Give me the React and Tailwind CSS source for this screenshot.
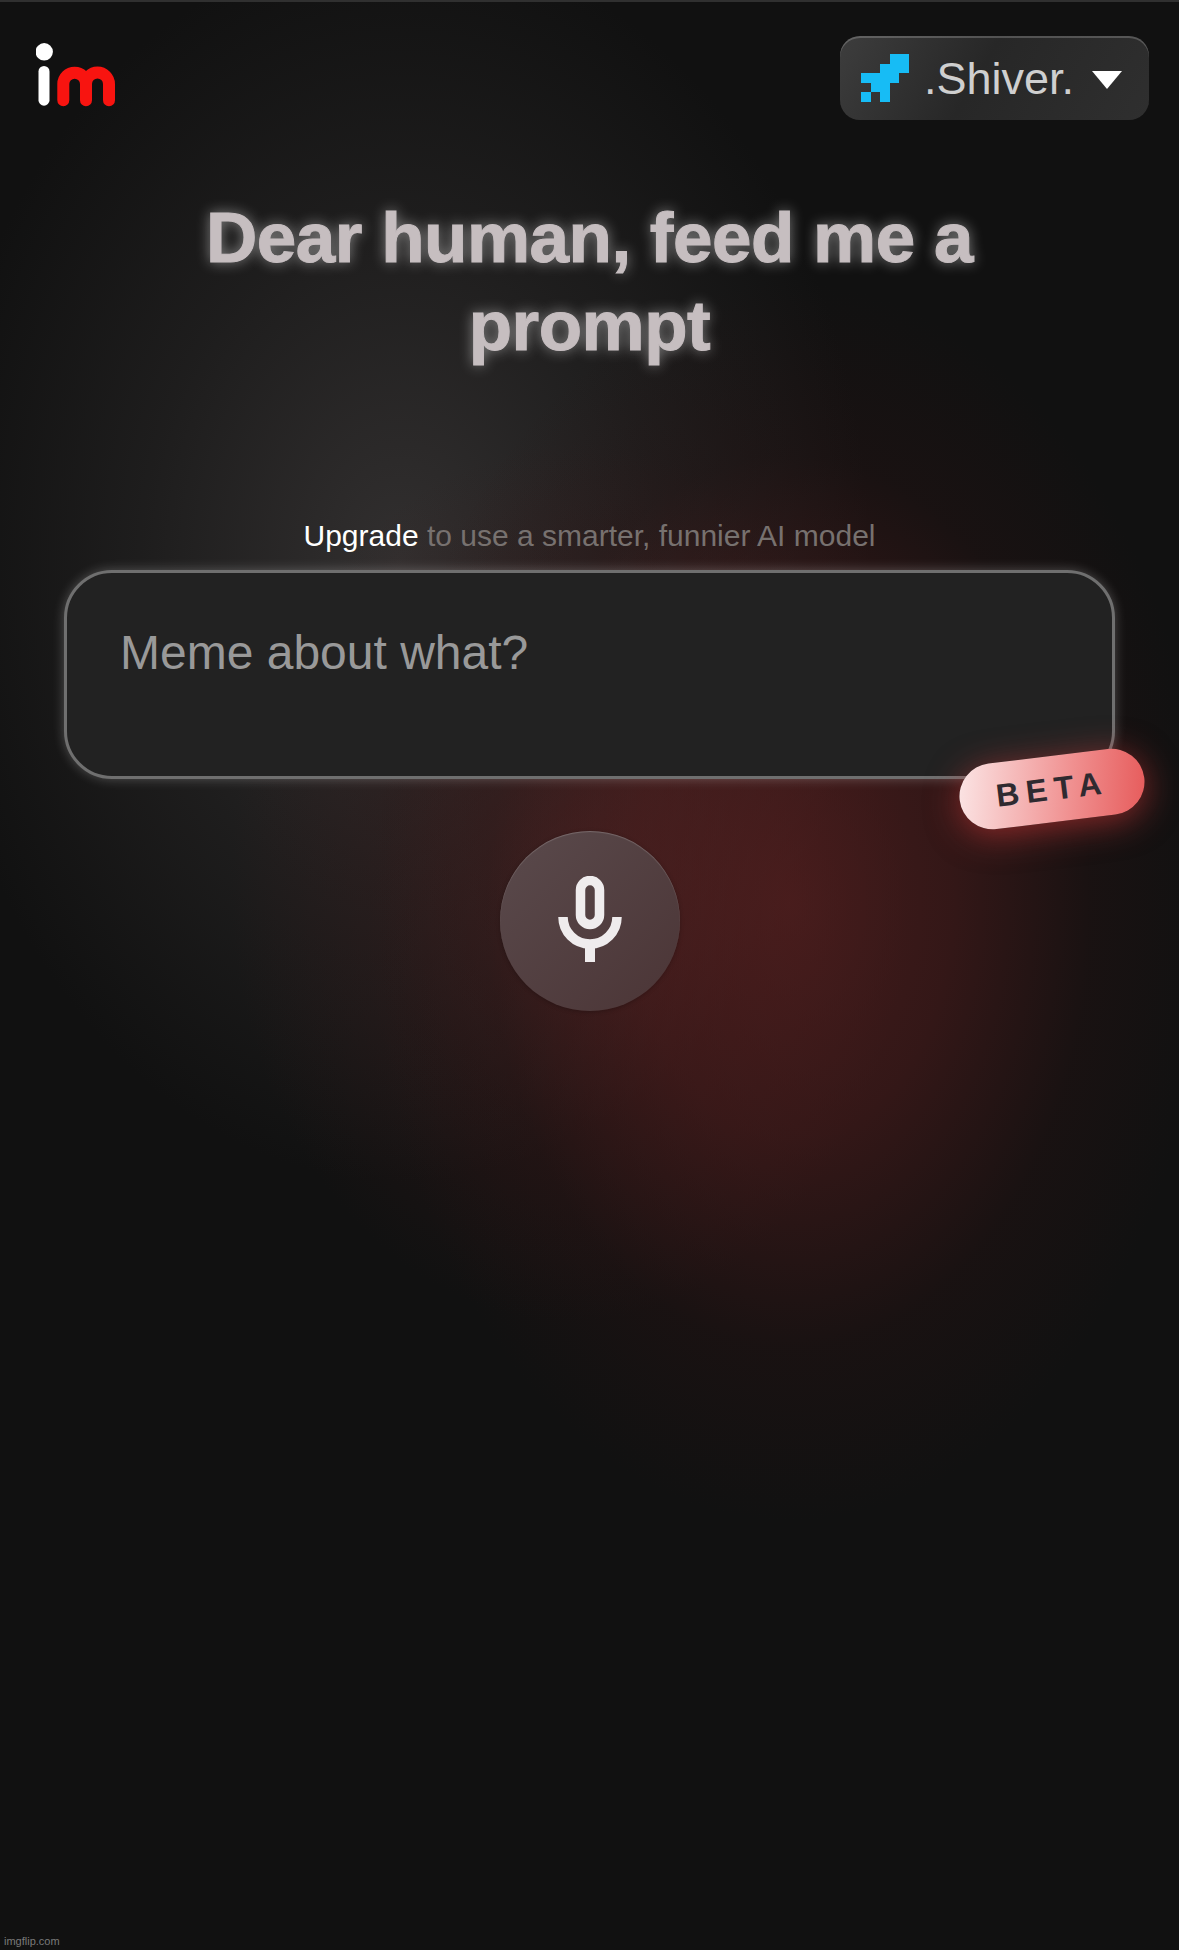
import React from 'react';

const pixels = [
  [3, 0], [4, 0],
  [2, 1], [3, 1], [4, 1],
  [0, 2], [1, 2], [2, 2], [3, 2],
  [1, 3], [2, 3],
  [0, 4], [2, 4],
];

function Logo() {
  return (
    <svg width="90" height="80" viewBox="0 0 90 80" className="block">
      <circle cx="8.2" cy="8.8" r="8.7" fill="#fff" />
      <line x1="8" y1="28.5" x2="8" y2="57.2" stroke="#fff" strokeWidth="11" strokeLinecap="round" />
      <path
        d="M27.3 57.2 V41 A11.35 11.35 0 0 1 50 41 V57.2 M50 41 A11.5 11.5 0 0 1 73 41 V57.2"
        fill="none"
        stroke="#f81410"
        strokeWidth="12"
        strokeLinecap="round"
        strokeLinejoin="round"
      />
    </svg>
  );
}

function PixelIcon() {
  return (
    <svg width="48" height="48" viewBox="0 0 5 5" shapeRendering="crispEdges" className="block shrink-0">
      {pixels.map(([x, y]) => (
        <rect key={`${x}-${y}`} x={x} y={y} width="1" height="1" fill="#17bcf5" />
      ))}
    </svg>
  );
}

function MicIcon() {
  return (
    <svg width="64" height="86" viewBox="0 0 64 86" fill="none" className="block mb-[4px]">
      <rect x="22.5" y="4.5" width="19" height="44" rx="9.5" stroke="#efeced" strokeWidth="9.5" />
      <path d="M5 41 A27 27 0 0 0 59 41" stroke="#efeced" strokeWidth="9.5" />
      <path d="M32 66 V86" stroke="#efeced" strokeWidth="10" />
    </svg>
  );
}

export default function App() {
  return (
    <div className="relative w-[1179px] h-[1950px] overflow-hidden border-t-2 border-[#303030] bg-[#111111] bg-[radial-gradient(ellipse_420px_620px_at_790px_900px,rgba(100,34,34,0.62),rgba(90,30,30,0.48)_38%,rgba(50,20,20,0.24)_72%,rgba(17,17,17,0)_100%),radial-gradient(ellipse_340px_440px_at_570px_880px,rgba(80,36,36,0.55),rgba(60,28,28,0.3)_55%,rgba(17,17,17,0)_100%),radial-gradient(ellipse_470px_620px_at_400px_560px,rgba(70,66,66,0.62),rgba(48,46,46,0.42)_55%,rgba(17,17,17,0)_100%)] font-['Liberation_Sans',Arial,sans-serif]">
      <header className="flex justify-between items-start pl-[36px] pr-[30px] pt-[34px]">
        <div className="pt-[7px]">
          <Logo />
        </div>
        <button className="flex items-center h-[84px] w-[309px] pl-[21px] rounded-[20px] bg-[linear-gradient(120deg,#3d3d3d,#272727_45%,#2f2f2f)] shadow-[inset_0_2px_0_rgba(255,255,255,0.2)]">
          <PixelIcon />
          <span className="ml-[15px] text-[45px] leading-none text-[#cfcfcf]">.Shiver.</span>
          <span className="ml-[18px] mt-[4px] w-0 h-0 border-l-[15px] border-r-[15px] border-t-[18px] border-l-transparent border-r-transparent border-t-white" />
        </button>
      </header>

      <main className="flex flex-col items-center">
        <h1 className="mt-[71px] w-[820px] text-center text-[71px] leading-[88px] font-bold tracking-[-0.5px] text-[#c6bec0] [-webkit-text-stroke:1px_#c6bec0] [text-shadow:0_0_14px_rgba(255,255,255,0.5)]">
          Dear human, feed me a prompt
        </h1>

        <p className="mt-[149px] text-[30px] leading-[34px] text-[#77716f]">
          <span className="text-white">Upgrade</span> to use a smarter, funnier AI model
        </p>

        <div className="relative mt-[17px] w-[1051px] h-[209px]">
          <div className="w-full h-full rounded-[48px] border-[3px] border-[#6f6f6f] bg-[#222222] pl-[53px] pt-[52px] text-[48px] leading-[56px] text-[#999999] shadow-[0_0_12px_rgba(255,255,255,0.25)]">
            Meme about what?
          </div>
          <div className="absolute left-[895px] top-[186px] flex items-center justify-center w-[186px] h-[66px] rounded-full -rotate-[7deg] bg-[linear-gradient(100deg,#fbe6e6,#f09090_60%,#e65a5a)] text-[32px] font-bold tracking-[7px] text-[#2f2a30] shadow-[0_6px_34px_rgba(230,60,60,0.55)]">
            BETA
          </div>
        </div>

        <button className="mt-[52px] flex items-center justify-center w-[180px] h-[180px] rounded-full bg-[linear-gradient(135deg,#5a4a4c,#4b3536)] shadow-[inset_0_1px_1px_rgba(255,255,255,0.2),0_1px_4px_rgba(0,0,0,0.25)]">
          <MicIcon />
        </button>
      </main>

      <span className="absolute left-[4px] bottom-[2px] text-[11px] leading-[14px] text-[#7a7a7a]">imgflip.com</span>
    </div>
  );
}
